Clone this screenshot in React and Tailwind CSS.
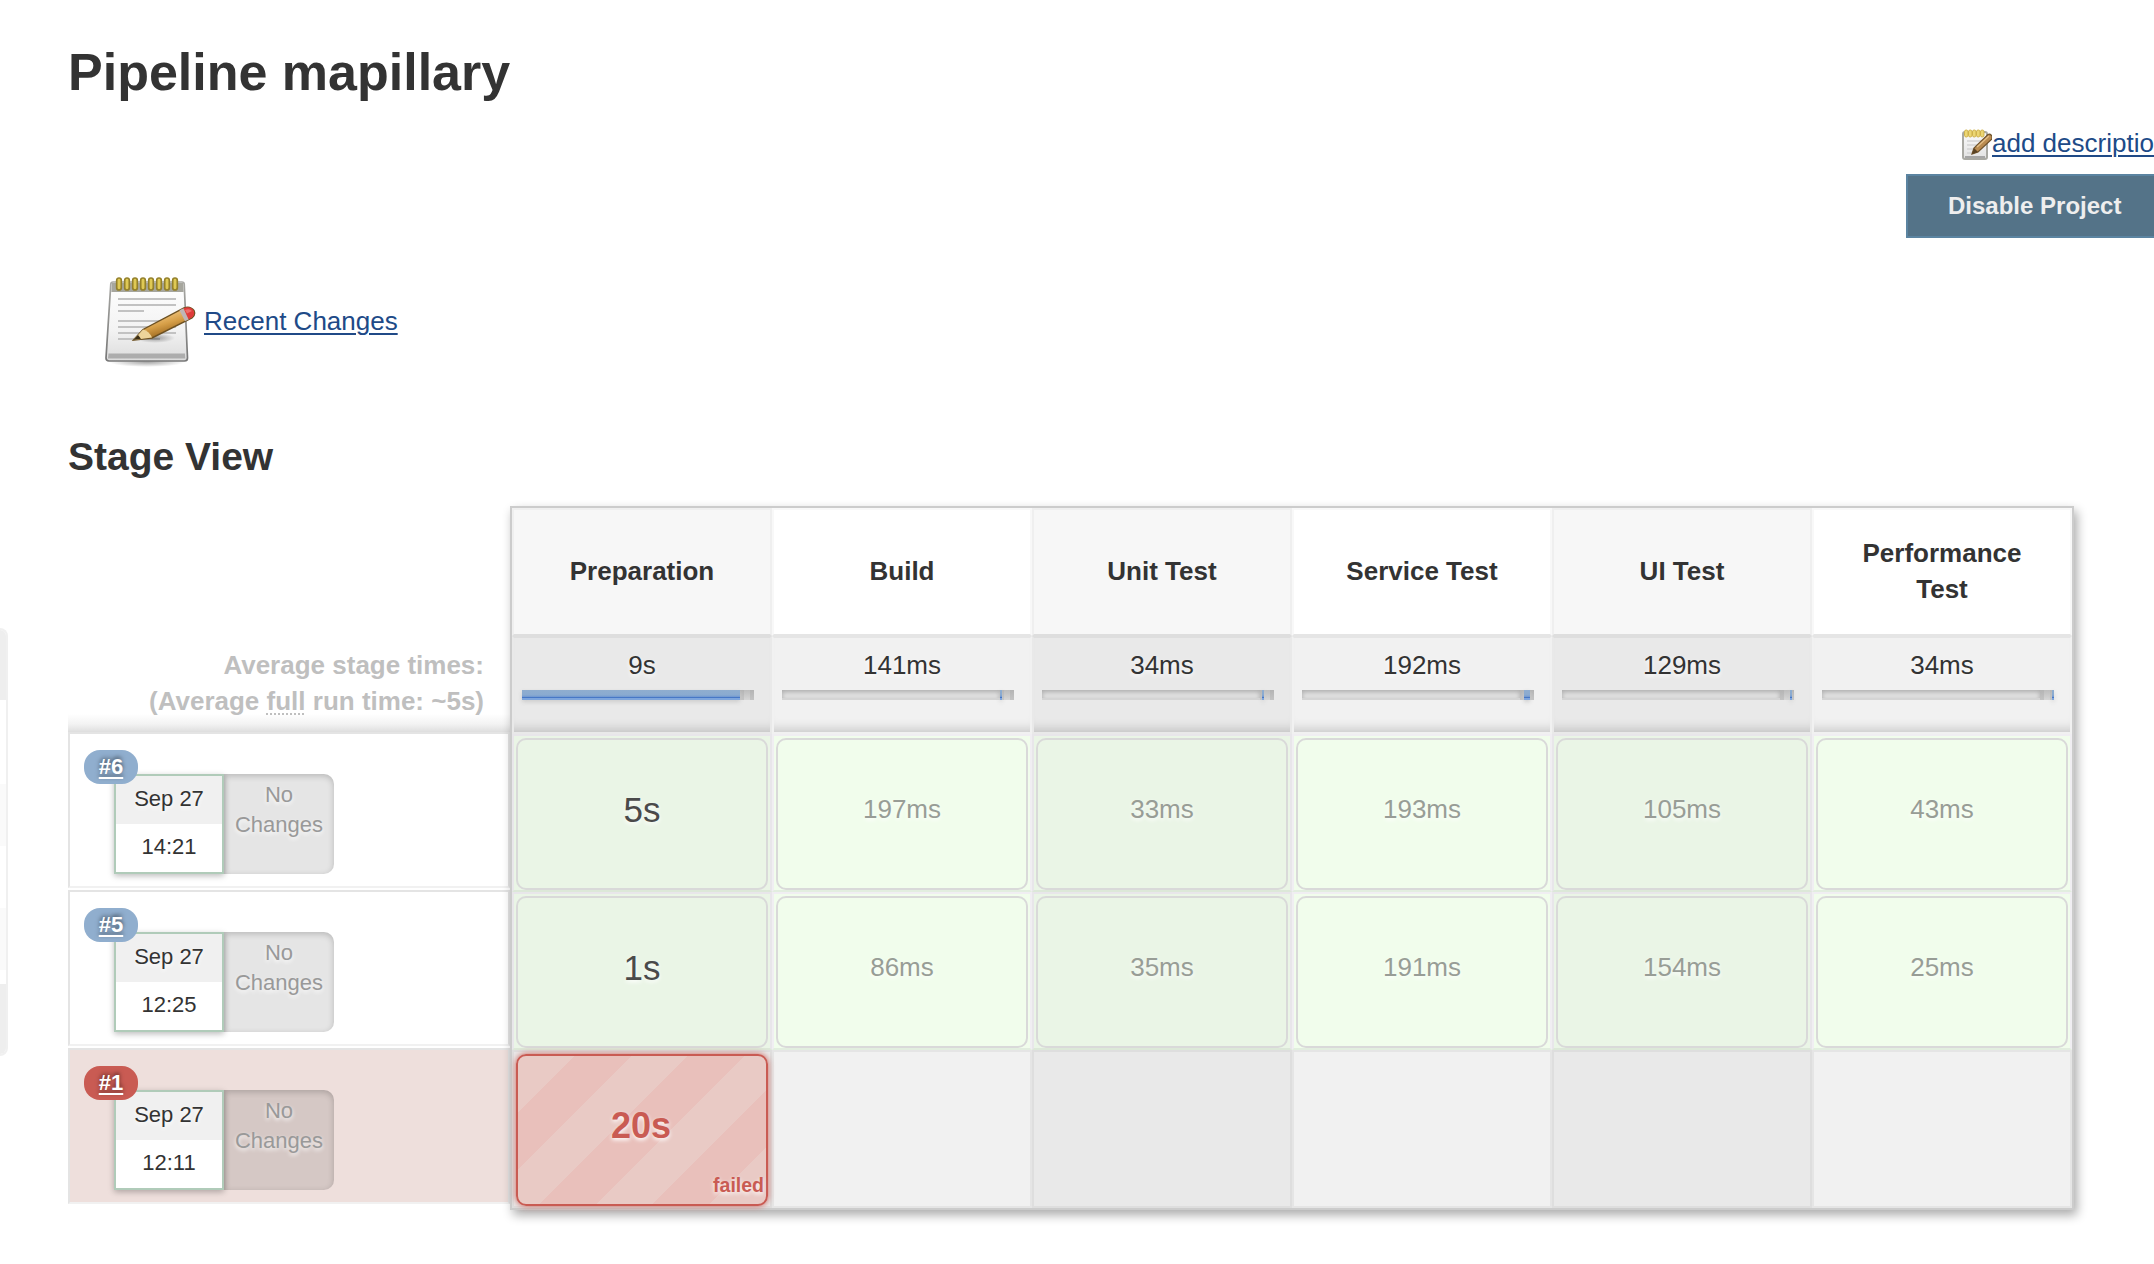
import React from "react";

const stages = [
  { name: "Preparation", mean: "9s", before: 0, width: 218 },
  { name: "Build", mean: "141ms", before: 218, width: 2 },
  { name: "Unit Test", mean: "34ms", before: 220, width: 2 },
  { name: "Service Test", mean: "192ms", before: 222, width: 6 },
  { name: "UI Test", mean: "129ms", before: 228, width: 2 },
  { name: "Performance Test", mean: "34ms", before: 230, width: 2 },
];

const runs = [
  { id: "#6", time: "14:21", values: ["5s", "197ms", "33ms", "193ms", "105ms", "43ms"] },
  { id: "#5", time: "12:25", values: ["1s", "86ms", "35ms", "191ms", "154ms", "25ms"] },
  { id: "#1", time: "12:11", failed: true, values: ["20s", "", "", "", "", ""] },
];

const textGlow = "[text-shadow:0_2px_4px_#fff]";

function NotepadIcon({ className }) {
  return (
    <svg viewBox="0 0 96 96" className={className}>
      <defs>
        <linearGradient id="paper" x1="0" y1="0" x2="0" y2="1">
          <stop offset="0" stopColor="#ffffff" />
          <stop offset="0.6" stopColor="#f3f3f3" />
          <stop offset="1" stopColor="#dcdcdc" />
        </linearGradient>
        <linearGradient id="edge" x1="0" y1="0" x2="0" y2="1">
          <stop offset="0" stopColor="#a8a8a4" />
          <stop offset="1" stopColor="#777" />
        </linearGradient>
        <linearGradient id="wood" x1="0.35" y1="0.3" x2="0.6" y2="0.75">
          <stop offset="0" stopColor="#edc077" />
          <stop offset="0.5" stopColor="#d69f48" />
          <stop offset="1" stopColor="#a87327" />
        </linearGradient>
        <radialGradient id="cast">
          <stop offset="0" stopColor="#000" stopOpacity="0.35" />
          <stop offset="1" stopColor="#000" stopOpacity="0" />
        </radialGradient>
      </defs>
      <ellipse cx="47" cy="90" rx="38" ry="5" fill="url(#cast)" />
      <path d="M10.800 12 Q11 10 13 10 H82 Q84 10 84.200 12 L87.500 86 Q87.500 89 84.500 89 H9 Q6 89 6 86 Z" fill="url(#paper)" stroke="url(#edge)" strokeWidth="1.700" />
      <path d="M11.800 11 H83.200 L83.600 20 H11.400 Z" fill="#a6a69e" />
      <path d="M8.500 81.500 H85 L85.300 86.500 H8 Z" fill="#adadad" />
      <g fill="#dfc955" stroke="#94802a" strokeWidth="1.700">
        {[19, 27, 35, 43, 51, 59, 67, 75].map((x) => (
          <rect key={x} x={x - 2.3} y="6" width="4.600" height="12" rx="2.300" />
        ))}
      </g>
      <path d="M18 27H76M18 33H76M18 39H44M18 49H76M18 55H76M18 61H76M18 67H60" stroke="#c2c2c2" strokeWidth="2" />
      <ellipse cx="55" cy="66" rx="20" ry="5" fill="url(#cast)" />
      <path d="M33.500 68 L43 57.500 L84 36 Q90 33.500 94 38.500 Q96 43 92 46 L52 66 Z" fill="url(#wood)" stroke="#6d5122" strokeWidth="1.400" />
      <path d="M33.500 68 L43 57.500 Q49 59 52 65.500 Z" fill="#edd49a" />
      <path d="M33.500 68 L38 63 L41 66.800 Z" fill="#3c3018" />
      <path d="M79.500 38.300 L83.500 36.300 L89 47.300 L85 49.300 Z" fill="#bfb6b6" />
      <path d="M83.500 36.300 Q90 33.500 93.500 38.500 Q95.500 43 91.500 45.800 L88.500 47.300 Z" fill="#df3b3a" />
      <path d="M85 38 Q89.500 36 92 39 L87 41.500 Z" fill="#ef6e6a" />
    </svg>
  );
}

function SmallNotepadIcon() {
  return (
    <svg viewBox="0 0 32 32" className="h-8 w-8 shrink-0">
      <defs>
        <linearGradient id="sheet" x1="0" y1="0" x2="0" y2="1">
          <stop offset="0" stopColor="#fbfbfb" />
          <stop offset="1" stopColor="#e2e2e2" />
        </linearGradient>
      </defs>
      <rect x="3" y="4" width="24" height="27" rx="2" fill="url(#sheet)" stroke="#a9a9a3" strokeWidth="2" />
      <path d="M5 29h20" stroke="#a6a6a6" strokeWidth="2" />
      <path d="M7 13h16M7 17h14M7 21h10M7 25h8" stroke="#d3d3d3" strokeWidth="1.500" />
      <g fill="#ecd673" stroke="#cfb24a" strokeWidth="1">
        {[4.5, 8.5, 12.5, 16.5, 20.5].map((x) => (
          <rect key={x} x={x} y="2" width="3.500" height="7" rx="1.700" />
        ))}
      </g>
      <path d="M12 26 L14 20 L28 6.500 Q30 5.500 32 8 V11 L18 24 Z" fill="#b98b50" stroke="#6f532c" strokeWidth="1.200" />
      <path d="M17 19 L29 8" stroke="#e3bd84" strokeWidth="1.500" />
      <path d="M12 26 L14 20 L18 24 Z" fill="#5a4324" />
    </svg>
  );
}

function MeanBar({ before, width }) {
  const dark = "bg-linear-to-b from-[#b4b4b4] to-[#c4c4c4]";
  return (
    <div className="relative mt-[7px] ml-2 flex h-[10px] w-[232px]">
      <div className="w-[218px] border-b-2 border-[#d4d4d4] bg-[#e3e3e3] shadow-[inset_0_2px_5px_#aaa]" />
      <div className={"w-1 " + dark} />
      <div className="w-[6px] bg-linear-to-b from-[#bdbdbd] to-[#d6d6d6]" />
      <div className={"w-1 " + dark} />
      <div
        className="absolute top-0 h-full bg-[linear-gradient(#8fadcf,#8aaad0_50%,#6f97d0_70%,#4777c6_75%,#7ea5dc_85%)] shadow-[0_2px_4px_#ccc]"
        style={{ left: before, width }}
      />
    </div>
  );
}

function RunLabel({ run, first }) {
  return (
    <div
      className={
        "flex h-[156px] border-2 border-[#e4e4e4] border-b-[#f1f1f1] pt-4 pl-[14px] " +
        (run.failed ? "bg-[#eedfdc]" : "bg-white") +
        (first ? "" : " mt-[2px]")
      }
    >
      <div className="relative flex h-[124px] pt-6 pl-[30px]">
        <a
          className={
            "absolute top-0 left-0 z-10 flex h-[34px] w-[54px] items-center justify-center rounded-[16px] text-[22px] font-bold text-white underline decoration-2 underline-offset-[3px] [text-shadow:0_-2px_4px_#0008] " +
            (run.failed ? "bg-[#c95b53]" : "bg-[#90aece]")
          }
        >
          {run.id}
        </a>
        <div className="z-[1] h-[100px] w-[110px] border-2 border-[#b0cbb9] bg-white text-center text-[22px] shadow-[0_2px_6px_#0004]">
          <div className={"h-12 bg-[#f0f0f0] leading-[46px] text-[#333] " + textGlow}>Sep 27</div>
          <div className="leading-[46px] text-[#333]">{run.time}</div>
        </div>
        <div
          className={
            "h-[100px] w-[110px] rounded-r-[10px] bg-[#0000001a] pt-[6px] text-center text-[22px] leading-[30px] text-[#999] shadow-[inset_0_2px_6px_#0003] " +
            textGlow
          }
        >
          No
          <br />
          Changes
        </div>
      </div>
    </div>
  );
}

function StageCell({ value, index, failed }) {
  const odd = index % 2 === 0;
  if (!value) {
    return (
      <div className={"h-[158px] w-[260px] border-2 " + (odd ? "border-[#dedede] bg-[#e9e9e9]" : "border-[#e5e5e5] bg-[#f1f1f1]")} />
    );
  }
  if (failed) {
    return (
      <div className="h-[158px] w-[260px] border-2 border-[#dedede] bg-[#e9e9e9] px-[2px] pt-[2px]">
        <div className="relative flex h-[152px] items-center justify-center rounded-[10px] border-2 border-[#c95b53] bg-[repeating-linear-gradient(135deg,#e9cac5_0_40px,#e9c0bb_40px_80px)] shadow-[0_0_6px_#c95b53]">
          <span className={"pr-[2px] pb-2 text-[36px] font-bold text-[#c95b53] " + textGlow}>{value}</span>
          <span className={"absolute right-[2px] bottom-[7px] text-[19.5px] leading-6 font-bold text-[#c95b53] " + textGlow}>failed</span>
        </div>
      </div>
    );
  }
  return (
    <div
      className={
        "h-[158px] w-[260px] border-2 px-[2px] pt-[2px] " +
        (odd ? "border-[#e8e6ea] border-b-[#dce8d8] bg-[#eaf5e6]" : "border-[#f0eef2] border-b-[#e2eedf] bg-[#f1fdec]")
      }
    >
      <div className="flex h-[152px] items-center justify-center rounded-[10px] border-2 border-[#d9d9d9]">
        <span className={(index === 0 ? "pb-2 text-[35px] text-[#4a4a4a] " : "pb-[10px] text-[26px] text-[#989d96] ") + textGlow}>{value}</span>
      </div>
    </div>
  );
}

export default function App() {
  return (
    <div className="flex h-[1264px] w-[2154px] overflow-hidden bg-white font-['Liberation_Sans',Arial,sans-serif] text-[26px] leading-9 text-[#333]">
      <aside className="mt-[628px] h-[428px] w-2 shrink-0 overflow-hidden rounded-r-[10px] border-2 border-l-0 border-[#f0f0f0]">
        <div className="h-[70px] bg-[#eee]" />
        <div className="mt-[84px] h-[62px] bg-[#fafafa]" />
        <div className="mt-[62px] h-[62px] bg-[#fafafa]" />
        <div className="mt-[14px] h-[72px] bg-[#eee]" />
      </aside>

      <main className="w-[2146px] shrink-0 pt-9 pl-[60px]">
        <h1 className="h-[72px] text-[52px] leading-[72px] font-bold">Pipeline mapillary</h1>

        <div className="flex h-[130px] flex-col items-end pt-[18px]">
          <div className="flex h-12 w-[194px] items-start pt-[2px]">
            <SmallNotepadIcon />
            <a className="-mt-[3px] whitespace-nowrap text-[#204a87] underline decoration-2 underline-offset-[3px]">add description</a>
          </div>
          <div className="h-16 w-[248px] shrink-0 overflow-hidden border-2 border-r-0 border-[#5b84a1] bg-[#547388] pl-10 text-2xl leading-[60px] font-bold whitespace-nowrap text-[#eee]">
            Disable Project
          </div>
        </div>

        <div className="mt-[34px] flex h-24 items-center gap-2 pl-8">
          <NotepadIcon className="h-24 w-24" />
          <a className="pt-[2px] text-[#204a87] underline decoration-2 underline-offset-[3px]">Recent Changes</a>
        </div>

        <h2 className="mt-[62px] h-[54px] text-[39px] leading-[54px] font-bold">Stage View</h2>

        <div className="mt-[22px] flex">
          <div className="w-[442px]">
            <div className="flex h-[226px] flex-col items-end justify-end bg-[linear-gradient(to_top,#dedede,#f3f3f3_8px,#fff_18px)] pr-[26px] pb-[13px] text-right font-bold text-[#bfbfbf]">
              <span>Average stage times:</span>
              <span>
                (Average <span className="underline decoration-dotted decoration-2 underline-offset-[3px]">full</span> run time: ~5s)
              </span>
            </div>
            {runs.map((run, i) => (
              <RunLabel key={run.id} run={run} first={i === 0} />
            ))}
          </div>

          <div className="w-[1564px] border-2 border-[#ccc] shadow-[3px_5px_10px_#0005]">
            <div className="grid grid-cols-6">
              {stages.map((s, i) => (
                <div
                  key={s.name}
                  className={
                    "flex h-32 items-center justify-center border-2 px-8 pb-[2px] text-center font-bold " +
                    (i % 2 === 0 ? "border-[#efefef] border-b-[#dedede] bg-[#f7f7f7]" : "border-[#f8f8f8] border-b-[#e5e5e5] bg-white")
                  }
                >
                  {s.name}
                </div>
              ))}
              {stages.map((s, i) => (
                <div
                  key={s.name}
                  className={
                    "h-[98px] border-2 pt-[9px] text-center shadow-[inset_0_-12px_12px_-10px_#0003] " +
                    (i % 2 === 0 ? "border-[#e9e9e9] border-t-[#dedede] bg-[#e9e9e9]" : "border-[#f1f1f1] border-t-[#e5e5e5] bg-[#f1f1f1]")
                  }
                >
                  <div className={textGlow}>{s.mean}</div>
                  <MeanBar before={s.before} width={s.width} />
                </div>
              ))}
              {runs.map((run) =>
                run.values.map((v, i) => (
                  <StageCell key={run.id + i} value={v} index={i} failed={run.failed} />
                ))
              )}
            </div>
          </div>
        </div>
      </main>
    </div>
  );
}
